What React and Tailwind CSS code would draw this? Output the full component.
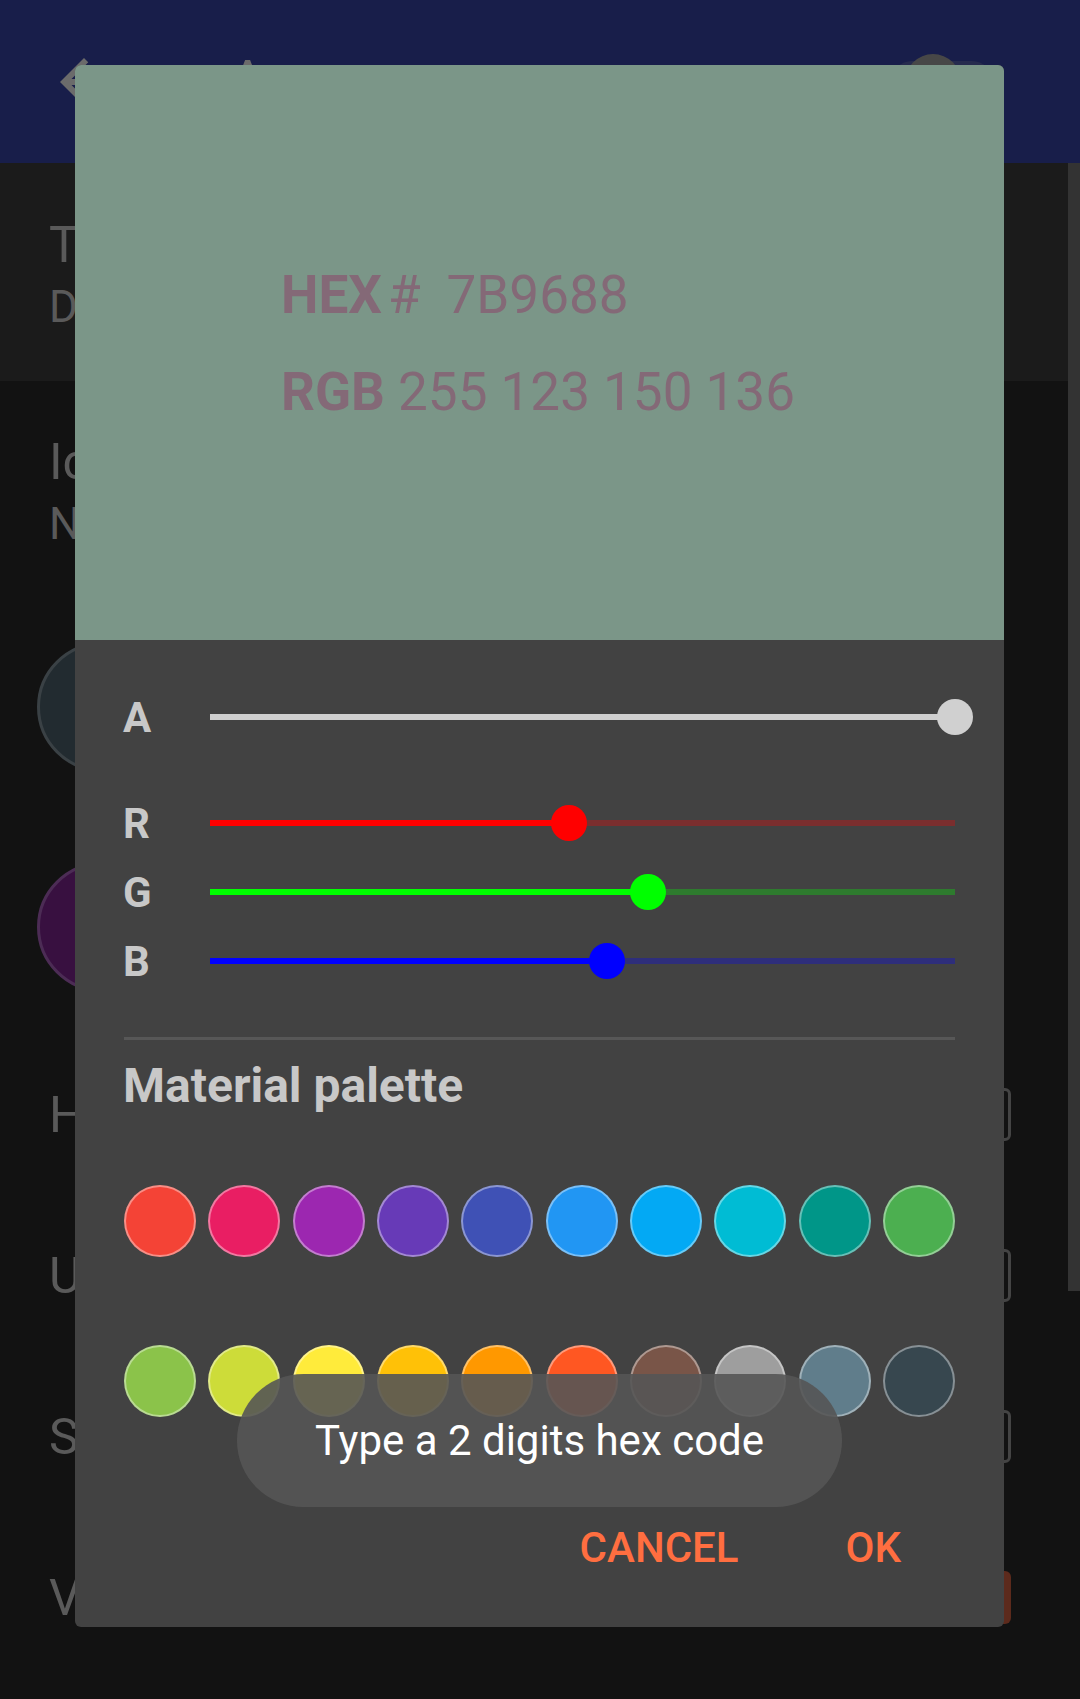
import React from "react";

const sliders = [
  { label: "A", value: 255, active: "bg-[#cfcfcf]", rest: "bg-[#cfcfcf]", thumb: "bg-[#d0d0d0]" },
  { label: "R", value: 123, active: "bg-[#ff0000]", rest: "bg-[#7b2e2e]", thumb: "bg-[#ff0000]" },
  { label: "G", value: 150, active: "bg-[#00ff00]", rest: "bg-[#2e7b2e]", thumb: "bg-[#00ff00]" },
  { label: "B", value: 136, active: "bg-[#0000ff]", rest: "bg-[#2e2e7b]", thumb: "bg-[#0000ff]" },
];

const rowOne = ["bg-[#f44336]", "bg-[#e91e63]", "bg-[#9c27b0]", "bg-[#673ab7]", "bg-[#3f51b5]", "bg-[#2196f3]", "bg-[#03a9f4]", "bg-[#00bcd4]", "bg-[#009688]", "bg-[#4caf50]"];
const rowTwo = ["bg-[#8bc34a]", "bg-[#cddc39]", "bg-[#ffeb3b]", "bg-[#ffc107]", "bg-[#ff9800]", "bg-[#ff5722]", "bg-[#795548]", "bg-[#9e9e9e]", "bg-[#607d8b]", "bg-[#37474f]"];

function SliderRow({ s, className = "" }) {
  const pct = (s.value / 255) * 100;
  return (
    <div className={`flex items-center h-[69px] ${className}`}>
      <div className="w-[87px] pt-[3px] text-[42px] leading-none font-bold text-[#c8c8c8]">{s.label}</div>
      <div className={`relative flex-1 h-[6px] ${s.rest}`}>
        <div className={`absolute left-0 top-0 h-full ${s.active}`} style={{ width: `${pct}%` }} />
        <div
          className={`absolute top-1/2 w-[36px] h-[36px] rounded-full -translate-x-1/2 -translate-y-1/2 ${s.thumb}`}
          style={{ left: `${pct}%` }}
        />
      </div>
    </div>
  );
}

function SettingRow({ title, box }) {
  return (
    <div className="flex items-center justify-between h-[161px] pl-[49px] pr-[69px]">
      <span className="text-[50px] leading-none text-[#5a5a5a]">{title}</span>
      {box === "filled" ? (
        <div className="w-[53px] h-[53px] rounded-[6px] bg-[#5c2a1c]" />
      ) : (
        <div className="w-[53px] h-[53px] rounded-[6px] border-[3px] border-[#444444]" />
      )}
    </div>
  );
}

export default function App() {
  return (
    <div className="relative w-[1080px] h-[1699px] overflow-hidden bg-[#121212] font-['Roboto','Liberation_Sans',sans-serif]">
      {/* page behind the dialog (dimmed) */}
      <header className="flex items-center h-[163px] bg-[#181e4a] pl-[48px] pr-[87px]">
        <svg viewBox="0 0 24 24" className="w-[72px] h-[72px] fill-[#6b6b6b]">
          <path d="M20 11H7.83l5.59-5.59L12 4l-8 8 8 8 1.41-1.41L7.83 13H20v-2z" />
        </svg>
        <span className="ml-[108px] text-[60px] leading-none text-[#6b6b6b]">Appearance</span>
        <div className="relative ml-auto w-[102px] h-[42px] rounded-full bg-[#262b4e]">
          <div className="absolute left-[14px] top-1/2 -translate-y-1/2 w-[56px] h-[56px] rounded-full bg-[#474747]" />
        </div>
      </header>

      <div className="h-[218px] bg-[#1b1b1b] pl-[49px] pt-[57px]">
        <div className="text-[50px] leading-none text-[#5a5a5a]">Theme</div>
        <div className="mt-[15px] text-[44px] leading-none text-[#5a5a5a]">Dark</div>
      </div>

      <div className="pl-[49px] pt-[56px]">
        <div className="text-[50px] leading-none text-[#5a5a5a]">Icon</div>
        <div className="mt-[15px] text-[44px] leading-none text-[#5a5a5a]">None</div>
      </div>

      <div className="flex flex-col gap-[90px] pl-[37px] pt-[96px]">
        <div className="w-[130px] h-[130px] rounded-full bg-[#222b30] border-[3px] border-[#3a4145]" />
        <div className="w-[130px] h-[130px] rounded-full bg-[#381040] border-[3px] border-[#4c2c55]" />
      </div>

      <div className="mt-[42px]">
        <SettingRow title="Hue" box="outline" />
        <SettingRow title="Unread color" box="outline" />
        <SettingRow title="Sound" box="outline" />
        <SettingRow title="Vibrate" box="filled" />
      </div>

      <div className="absolute right-0 top-[163px] w-[12px] h-[1128px] bg-[#333333]" />

      {/* color picker dialog */}
      <div className="absolute left-[75px] top-[65px] w-[929px] h-[1562px] rounded-[6px] overflow-hidden bg-[#424242] flex flex-col">
        <div className="h-[575px] shrink-0 bg-[#7b9688] pt-[204px] pl-[206px] text-[53px] leading-none text-[#846977]">
          <div className="flex">
            <span className="font-bold">HEX</span>
            <span className="ml-[6px]">#</span>
            <span className="ml-[26px]">7B9688</span>
          </div>
          <div className="mt-[44px]">
            <span className="font-bold">RGB</span> 255 123 150 136
          </div>
        </div>

        <div className="pt-[42px] pl-[48px] pr-[49px]">
          <SliderRow s={sliders[0]} />
          <SliderRow s={sliders[1]} className="mt-[37px]" />
          <SliderRow s={sliders[2]} />
          <SliderRow s={sliders[3]} />
        </div>

        <div className="mt-[42px] mx-[49px] h-[3px] bg-[#575757]" />

        <div className="mt-[22px] pl-[48px] text-[48px] leading-none font-bold text-[#c8c8c8]">Material palette</div>

        <div className="mt-[75px] px-[49px] flex justify-between">
          {rowOne.map((c, i) => (
            <div key={i} className={`w-[72px] h-[72px] rounded-full border-2 border-white/40 ${c}`} />
          ))}
        </div>
        <div className="mt-[88px] px-[49px] flex justify-between">
          {rowTwo.map((c, i) => (
            <div key={i} className={`w-[72px] h-[72px] rounded-full border-2 border-white/40 ${c}`} />
          ))}
        </div>

        <div className="mt-[110px] flex justify-end gap-[107px] pr-[103px] text-[42px] leading-none font-medium text-[#ff6e40]">
          <span>CANCEL</span>
          <span>OK</span>
        </div>
      </div>

      {/* toast */}
      <div className="absolute left-[237px] top-[1374px] w-[605px] h-[133px] rounded-full bg-[#555555]/90 flex items-center justify-center">
        <span className="text-[42px] leading-none text-white">Type a 2 digits hex code</span>
      </div>
    </div>
  );
}
